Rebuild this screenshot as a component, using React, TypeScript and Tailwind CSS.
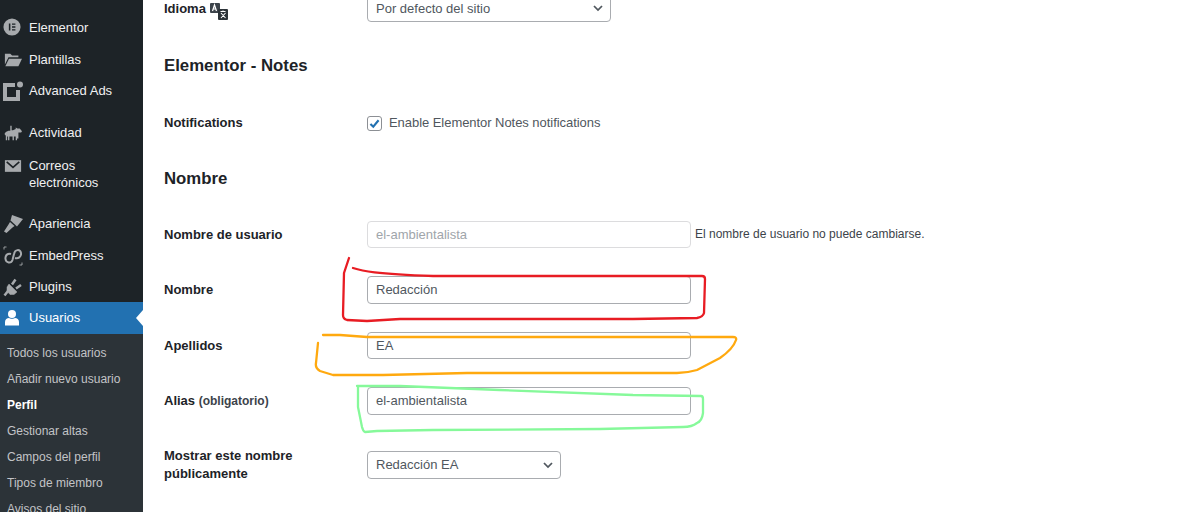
const Chevron = () => (
  <svg viewBox="0 0 20 20" className="w-4 h-4 absolute right-[4px] top-1/2 -translate-y-1/2 text-[#50575e]" fill="none" stroke="currentColor" strokeWidth="2.2">
    <path d="M5 7.5l5 5 5-5" />
  </svg>
);

const ElementorIcon = () => (
  <svg viewBox="0 0 20 20" className="w-[18px] h-[18px] -translate-y-[1px]">
    <circle cx="10" cy="10" r="9.500" fill="#a7aaad" />
    <path d="M6.500 6h1.700v8H6.500zM10 6h3.800v1.600H10zM10 9.200h3.800v1.600H10zM10 12.400h3.800V14H10z" fill="#1d2327" />
  </svg>
);

const FolderIcon = () => (
  <svg viewBox="0 0 20 20" className="w-[18px] h-[18px] ml-[1px]" fill="#a7aaad">
    <path d="M1 3h6l2 2h7v2H5L1 15z" />
    <path d="M5.500 8.500H20L16 17H1.500z" />
  </svg>
);

const AdsIcon = () => (
  <svg viewBox="0 0 20 20" className="w-[20px] h-[20px]" fill="#a7aaad">
    <path d="M0 2h12v4H4v10h9V9h4v11H0z" />
    <circle cx="17" cy="3.500" r="3" />
  </svg>
);

const ActivityIcon = () => (
  <svg viewBox="0 0 20 20" className="w-[18px] h-[18px] ml-[1px]" fill="#a7aaad">
    <path d="M7 2h1.500v5H10l3-1.500V4l2 1h2.500L20 8l-1 1.500h-3V16h-1.500v2H13v-4h-2v4H9.500v-4H6v4H4.500v-4H3.500v4H2v-5L.5 11l1.500-2 3-1.500H7z" />
  </svg>
);

const MailIcon = () => (
  <svg viewBox="0 0 20 20" className="w-[18px] h-[18px] ml-[1px]">
    <path d="M1 3.500h18v13H1z" fill="#a7aaad" />
    <path d="M3 5.500l7 6 7-6" fill="none" stroke="#1d2327" strokeWidth="1.800" />
  </svg>
);

const BrushIcon = () => (
  <svg viewBox="0 0 20 20" className="w-[20px] h-[20px]" fill="#a7aaad">
    <path d="M9 1l11 4-6 7.500-6.500-6z" />
    <path d="M7 8l4.500 4-2 1.500L3.500 19 1 17.500 5.500 10.500z" />
  </svg>
);

const EmbedIcon = () => (
  <svg viewBox="0 0 20 20" className="w-[20px] h-[20px]" fill="none" stroke="#a7aaad">
    <path d="M1 3.500V1h2.500M19 16.500V19h-2.500" strokeWidth="0.900" />
    <path d="M8 8C5 7 2 9 2.500 13c.5 4 5.500 5 7 1L11 8c1-5 6-5 7-1 .5 4-3 6-6 5" strokeWidth="2" />
  </svg>
);

const PluginIcon = () => (
  <svg viewBox="0 0 20 20" className="w-[20px] h-[20px]" fill="#a7aaad" stroke="#a7aaad">
    <path d="M6 7l8 8-3 2.500H7L4 14V10z" strokeWidth="0.500" />
    <path d="M9 7.500l3.500-5M13 11.500l5-3.500M5 14l-3.500 4.500" strokeWidth="2.500" fill="none" />
  </svg>
);

const UserIcon = () => (
  <svg viewBox="0 0 20 20" className="w-[20px] h-[20px]" fill="#ffffff">
    <circle cx="10" cy="6" r="4" />
    <path d="M3 17.500v-3.500C3 11.500 5 10 7 10c1 1 5 1 6 0 2 0 4 1.500 4 4v3.500z" />
  </svg>
);

const TranslateIcon = () => (
  <svg viewBox="0 0 20 20" className="w-[20px] h-[20px] ml-[3px] translate-y-[2px]">
    <rect x="1" y="2" width="10" height="10" rx="1" fill="#3c434a" />
    <path d="M3.500 10l2-6 2 6M4.200 8h2.800" stroke="#fff" strokeWidth="1.200" fill="none" />
    <rect x="9" y="8" width="10" height="11" rx="1" fill="#2c3338" />
    <path d="M11.500 10.500h5M14 9.500v1.500M12 17l4.500-5M12 12l4.500 5" stroke="#fff" strokeWidth="1.100" fill="none" />
  </svg>
);

const menuTop = [
  { label: "Elementor", icon: <ElementorIcon />, h: "h-[32px]" },
  { label: "Plantillas", icon: <FolderIcon />, h: "h-[31px]" },
  { label: "Advanced Ads", icon: <AdsIcon />, h: "h-[31px]" },
];

const menuMid = [
  { label: "Apariencia", icon: <BrushIcon />, h: "h-[32px]" },
  { label: "EmbedPress", icon: <EmbedIcon />, h: "h-[31px]" },
  { label: "Plugins", icon: <PluginIcon />, h: "h-[31px]" },
];

const subItems = [
  "Todos los usuarios",
  "Añadir nuevo usuario",
  "Perfil",
  "Gestionar altas",
  "Campos del perfil",
  "Tipos de miembro",
  "Avisos del sitio",
];

const MenuRow = ({ label, icon, h }: { label: string; icon: React.ReactNode; h: string }) => (
  <div className={`flex items-center shrink-0 ${h} text-[#f0f0f1]`}>
    <div className="w-[29px] flex justify-start pl-[3px] shrink-0">{icon}</div>
    <span>{label}</span>
  </div>
);

const Field = ({ label, value, note, disabled }: { label: string; value: string; note?: string; disabled?: boolean }) => (
  <div className="flex items-center h-[27.5px]">
    <div className="w-[203px] font-bold text-[#1d2327]">{label}</div>
    <div
      className={`w-[324px] h-[27.5px] border rounded-[4px] px-[8px] flex items-center ${
        disabled ? "border-[#dcdcde] text-[#a0a5aa]" : "border-[#a9acb0] text-[#50575e]"
      }`}
    >
      {value}
    </div>
    {note && <span className="ml-[4px] text-[12px] text-[#3c434a]">{note}</span>}
  </div>
);

const Sketches = () => (
  <svg className="absolute left-0 top-0 w-[1190px] h-[512px] pointer-events-none" viewBox="0 0 1190 512" fill="none" strokeWidth="2.3" strokeLinecap="round" strokeLinejoin="round">
    <path stroke="#e81c23" d="M353 268C362 271 375 274 433 276L702 276Q705 276 705 279L704 313Q703 317 697 318L633 319 400 319 367 321 347 320Q343 319 343 315L344 273 349 258" />
    <path stroke="#ffa90f" d="M323 335 340 335 367 337 733 337Q737 337 736 340 733 349 720 358L697 370Q687 373 677 373L600 373 467 373 383 375 333 375 320 371Q315 368 316 363L318 343" />
    <path stroke="#86f99a" d="M357 386 400 386 500 390 633 395 701 396Q703 396 703 399L703 413Q702 421 697 423 692 427 683 427L600 429 433 430 377 431 365 432Q363 431 362 427L358 407 358 387" />
  </svg>
);

export default function App() {
  return (
    <div className="relative flex w-[1190px] h-[512px] overflow-hidden bg-white text-[13px] font-['Liberation_Sans',Arial,sans-serif]">
      <aside className="w-[143px] shrink-0 bg-[#1d2327] pt-[12px] flex flex-col">
        {menuTop.map((m) => (
          <MenuRow key={m.label} {...m} />
        ))}
        <div className="h-[11px] shrink-0" />
        <MenuRow label="Actividad" icon={<ActivityIcon />} h="h-[32px]" />
        <div className="flex shrink-0 pt-[8px] pb-[8px] text-[#f0f0f1] leading-[17px] h-[50px]">
          <div className="w-[29px] pl-[3px] shrink-0">
            <MailIcon />
          </div>
          <span>
            Correos
            <br />
            electrónicos
          </span>
        </div>
        <div className="h-[9px] shrink-0" />
        {menuMid.map((m) => (
          <MenuRow key={m.label} {...m} />
        ))}
        <div className="relative flex shrink-0 items-center h-[32px] bg-[#2271b1] text-white">
          <div className="w-[29px] pl-[2px] shrink-0">
            <UserIcon />
          </div>
          <span>Usuarios</span>
          <div className="absolute right-0 top-[8px] border-y-[8px] border-y-transparent border-r-[7px] border-r-white" />
        </div>
        <div className="flex-1 bg-[#2c3338] pt-[6px] pl-[7px] text-[12px] text-[#c3c4c7]">
          {subItems.map((s) => (
            <div key={s} className={`h-[26px] flex items-center ${s === "Perfil" ? "font-bold text-white" : ""}`}>
              {s}
            </div>
          ))}
        </div>
      </aside>

      <main className="flex-1 pl-[21px] text-[#1d2327]">
        <div className="flex items-center h-[28px] -mt-[6px]">
          <div className="w-[203px] font-bold flex items-center pt-[1px]">
            Idioma
            <TranslateIcon />
          </div>
          <div className="relative w-[244px] h-[28px] border border-[#a9acb0] rounded-[4px] px-[8px] pt-[1px] flex items-center text-[#50575e]">
            Por defecto del sitio
            <Chevron />
          </div>
        </div>
        <h2 className="mt-[34px] text-[16.8px] font-bold leading-[20px]">Elementor - Notes</h2>
        <div className="flex items-center h-[20px] mt-[37px]">
          <div className="w-[203px] font-bold">Notifications</div>
          <div className="w-[15px] h-[15px] border border-[#8c8f94] rounded-[3px] flex items-center justify-center">
            <svg viewBox="0 0 16 16" className="w-[13px] h-[13px]" fill="none" stroke="#2271b1" strokeWidth="2.600">
              <path d="M3 8.500l3.500 3.500L13 4" />
            </svg>
          </div>
          <span className="ml-[7px] text-[#50575e] tracking-[-0.05px]">Enable Elementor Notes notifications</span>
        </div>
        <h2 className="mt-[36px] text-[16.8px] font-bold leading-[20px]">Nombre</h2>
        <div className="mt-[31.5px] flex flex-col gap-[28px]">
          <Field label="Nombre de usuario" value="el-ambientalista" disabled note="El nombre de usuario no puede cambiarse." />
          <Field label="Nombre" value="Redacción" />
          <Field label="Apellidos" value="EA" />
          <div className="flex items-center h-[27.5px]">
            <div className="w-[203px] font-bold">
              Alias <span className="font-bold text-[12px] text-[#3c434a]">(obligatorio)</span>
            </div>
            <div className="w-[324px] h-[27.5px] border border-[#a9acb0] rounded-[4px] px-[8px] flex items-center text-[#50575e]">el-ambientalista</div>
          </div>
        </div>
        <div className="flex items-center mt-[36.5px] h-[27.5px]">
          <div className="w-[203px] font-bold leading-[18px]">
            Mostrar este nombre
            <br />
            públicamente
          </div>
          <div className="relative w-[194px] h-[27.5px] border border-[#a9acb0] rounded-[4px] px-[8px] flex items-center text-[#50575e]">
            Redacción EA
            <Chevron />
          </div>
        </div>
      </main>
      <Sketches />
    </div>
  );
}
